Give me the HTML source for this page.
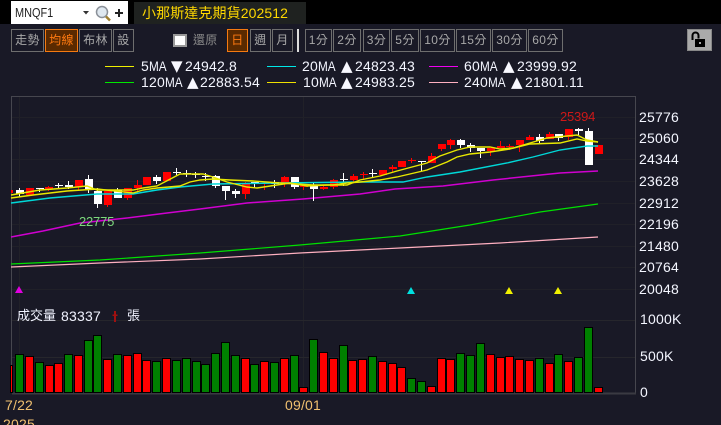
<!DOCTYPE html>
<html><head><meta charset="utf-8"><style>
html,body{margin:0;padding:0;background:#191926;overflow:hidden;width:721px;height:425px;}
#w{position:absolute;left:0;top:0;width:721px;height:425px;overflow:hidden;font-family:"Liberation Sans","WenQuanYi Zen Hei","Noto Sans CJK TC",sans-serif;}
div{position:absolute;box-sizing:border-box;white-space:nowrap;}
.b{top:29px;height:23px;border:1px solid #6e6e6e;color:#a8a8a8;font-size:12px;line-height:21px;text-align:center;letter-spacing:.4px;}
.a{border-color:#f57a10;background:#5a2a00;color:#ff7a10;}
.t{color:#f4f6ff;font-size:14px;line-height:16px;letter-spacing:.2px;}
.m{display:inline-block;transform:scaleX(.84);transform-origin:0 0;width:18px;letter-spacing:0;}
.g{color:#f8f8ff;font-family:"DejaVu Sans",sans-serif;font-size:15px;line-height:16px;}
.n{color:#f4f6ff;font-size:14px;line-height:16px;left:639px;letter-spacing:.2px;}
.l{height:1px;}
svg{position:absolute;left:0;top:0;}
</style></head><body><div id="w">
<div style="left:0;top:0;width:721px;height:24px;background:#000"></div>
<div style="left:11px;top:1px;width:117px;height:23px;background:#fff"></div>
<div style="left:15px;top:5px;color:#222;font-size:13px;line-height:16px;transform:scaleX(.84);transform-origin:0 0">MNQF1</div>
<div style="left:134px;top:2px;width:172px;height:22px;background:#1f2220;color:#ffd800;font-size:14px;line-height:23px;padding-left:8px;letter-spacing:.1px;">小那斯達克期貨202512</div>
<div class="b" style="left:11px;width:33px">走勢</div>
<div class="b a" style="left:45px;width:33px">均線</div>
<div class="b" style="left:79px;width:33px">布林</div>
<div class="b" style="left:113px;width:21px">設</div>
<div style="left:173px;top:34px;width:14px;height:13px;background:#fff;border:2px solid #999"></div>
<div style="left:193px;top:31px;color:#8a8a8a;font-size:12px;line-height:18px;letter-spacing:.2px">還原</div>
<div class="b a" style="left:227px;width:21px">日</div>
<div class="b" style="left:250px;width:21px">週</div>
<div class="b" style="left:272px;width:21px">月</div>
<div style="left:297px;top:29px;width:2px;height:23px;background:#ddd"></div>
<div class="b" style="left:305px;width:27px">1分</div>
<div class="b" style="left:333px;width:28px">2分</div>
<div class="b" style="left:363px;width:27px">3分</div>
<div class="b" style="left:391px;width:28px">5分</div>
<div class="b" style="left:420px;width:35px">10分</div>
<div class="b" style="left:456px;width:35px">15分</div>
<div class="b" style="left:492px;width:35px">30分</div>
<div class="b" style="left:528px;width:35px">60分</div>
<div style="left:687px;top:29px;width:25px;height:22px;background:#aaa;border:1px solid #888"></div>

<div class="l" style="left:105px;top:66px;width:29px;background:#f0f000"></div>
<div class="t" style="left:141px;top:58px">5<span class="m">MA</span></div>
<div class="g" style="left:171px;top:58px">▼</div>
<div class="t" style="left:185px;top:58px">24942.8</div>
<div class="l" style="left:267px;top:66px;width:29px;background:#00e8e8"></div>
<div class="t" style="left:302px;top:58px">20<span class="m">MA</span></div>
<div class="g" style="left:341px;top:58px">▲</div>
<div class="t" style="left:355px;top:58px">24823.43</div>
<div class="l" style="left:429px;top:66px;width:29px;background:#f000f0"></div>
<div class="t" style="left:464px;top:58px">60<span class="m">MA</span></div>
<div class="g" style="left:503px;top:58px">▲</div>
<div class="t" style="left:517px;top:58px">23999.92</div>
<div class="l" style="left:105px;top:82px;width:29px;background:#00e800"></div>
<div class="t" style="left:141px;top:74px">120<span class="m">MA</span></div>
<div class="g" style="left:187px;top:74px">▲</div>
<div class="t" style="left:200px;top:74px">22883.54</div>
<div class="l" style="left:267px;top:82px;width:29px;background:#f0e000"></div>
<div class="t" style="left:303px;top:74px">10<span class="m">MA</span></div>
<div class="g" style="left:341px;top:74px">▲</div>
<div class="t" style="left:355px;top:74px">24983.25</div>
<div class="l" style="left:429px;top:82px;width:29px;background:#ffb0c0"></div>
<div class="t" style="left:464px;top:74px">240<span class="m">MA</span></div>
<div class="g" style="left:511px;top:74px">▲</div>
<div class="t" style="left:525px;top:74px">21801.11</div>

<svg width="721" height="425" viewBox="0 0 721 425">
<!-- lock -->
<path d="M692.500 40v-4.500a3 3 0 0 1 6 0v3" fill="none" stroke="#000" stroke-width="2"/>
<path d="M695 39h10v8h-10z" fill="#000"/><path d="M699 42h2v2h-2z" fill="#aaa"/>
<!-- input icons -->
<path d="M83 11h6l-3 3.500z" fill="#333"/>
<circle cx="102" cy="12" r="5.500" fill="#dfe8f0" stroke="#8a9098" stroke-width="1.500"/>
<path d="M106 16.500l4 4" stroke="#a08030" stroke-width="2.500"/>
<path d="M115 13h8M119 9v8" stroke="#222" stroke-width="2"/>
<!-- frame -->
<path d="M11.500 96.500H635.500V393" fill="none" stroke="#46464e" stroke-width="1"/>
<path d="M11.500 96V393" stroke="#46464e"/>
<path d="M19.500 97V392M303.500 97V392" stroke="#212128"/>
<path d="M12 117.500H635M12 138.500H635M12 159.500H635M12 181.500H635M12 203.500H635M12 224.500H635M12 246.500H635M12 267.500H635M12 289.500H635" stroke="#202028"/>
<path d="M12 320.500H635M12 357.500H635" stroke="#26262c"/>
<path d="M12 393.500H636" stroke="#3a3a42" stroke-width="2"/>
<!-- MAs -->
<g fill="none" stroke-width="1.200">
<polyline stroke="#ffb0c0" points="11,267 100,263 200,259 300,253 400,248 500,243 598,237"/>
<polyline stroke="#00e000" points="11,264 100,260 200,253 300,245 400,236 470,225 540,212 598,204"/>
<polyline stroke="#d000d0" stroke-width="1.500" points="11,237 43,231 80,223 127,218 167,213 200,209 247,203 303,199 360,194 395,189 443,186 493,180 560,173 598,171"/>
</g>
<!-- candles -->
<path fill="#f00" d="M11 190h2v3h-2zM26 188h8v7h-8zM45 187h8v2h-8zM48 186h1v5h-1zM75 180h8v7h-8zM78 187h1v4h-1zM104 191h8v14h-8zM107 205h1v2h-1zM124 188h8v10h-8zM127 198h1v2h-1zM134 185h8v3h-8zM137 180h1v12h-1zM143 177h8v8h-8zM163 172h8v9h-8zM242 184h8v10h-8zM245 182h1v17h-1zM261 183h8v1h-8zM264 182h1v8h-1zM281 177h8v6h-8zM284 176h1v11h-1zM300 185h8v2h-8zM303 187h1v3h-1zM320 187h8v2h-8zM323 185h1v5h-1zM330 180h8v7h-8zM333 179h1v10h-1zM350 176h8v4h-8zM353 174h1v8h-1zM360 174h8v1h-8zM363 172h1v7h-1zM379 170h8v5h-8zM389 167h8v2h-8zM392 165h1v7h-1zM398 161h8v6h-8zM408 160h8v1h-8zM411 158h1v5h-1zM428 156h8v7h-8zM431 153h1v3h-1zM438 144h8v5h-8zM441 149h1v2h-1zM447 140h8v5h-8zM450 139h1v10h-1zM487 148h8v3h-8zM490 151h1v5h-1zM497 146h8v2h-8zM500 141h1v7h-1zM506 146h8v1h-8zM509 144h1v6h-1zM516 140h8v5h-8zM519 145h1v7h-1zM526 137h8v3h-8zM529 135h1v2h-1zM546 134h8v5h-8zM549 132h1v2h-1zM565 129h8v8h-8zM568 137h1v3h-1zM595 145h8v9h-8z"/>
<path fill="#fff" d="M16 190h8v4h-8zM19 188h1v9h-1zM36 188h8v1h-8zM39 188h1v4h-1zM55 185h8v1h-8zM58 183h1v5h-1zM65 185h8v2h-8zM68 181h1v8h-1zM85 179h8v11h-8zM88 175h1v18h-1zM94 191h8v13h-8zM97 188h1v20h-1zM114 190h8v8h-8zM117 188h1v2h-1zM153 177h8v4h-8zM156 175h1v9h-1zM173 172h8v1h-8zM176 168h1v7h-1zM183 173h8v1h-8zM186 170h1v7h-1zM192 174h8v1h-8zM195 172h1v6h-1zM202 176h8v1h-8zM205 173h1v8h-1zM212 176h8v10h-8zM215 175h1v13h-1zM222 186h8v5h-8zM225 191h1v9h-1zM232 191h8v3h-8zM235 189h1v9h-1zM251 182h8v2h-8zM254 184h1v4h-1zM271 182h8v2h-8zM274 180h1v8h-1zM291 177h8v10h-8zM294 187h1v2h-1zM310 186h8v3h-8zM313 183h1v18h-1zM340 179h8v1h-8zM343 173h1v13h-1zM369 173h8v1h-8zM372 169h1v8h-1zM418 161h8v1h-8zM421 161h1v10h-1zM457 140h8v5h-8zM460 139h1v9h-1zM467 145h8v3h-8zM470 143h1v9h-1zM477 148h8v3h-8zM480 151h1v7h-1zM536 137h8v4h-8zM539 134h1v9h-1zM555 134h8v4h-8zM558 138h1v3h-1zM575 129h8v2h-8zM578 128h1v7h-1zM585 131h8v34h-8zM588 128h1v3h-1z"/>
<g fill="none" stroke-width="1.400">
<polyline stroke="#00d8d8" points="11,203 50,198 97,194 133,194 157,190 180,187 213,184 280,183 360,182 403,182 427,177 460,172 507,163 533,157 560,150 587,146 598,146"/>
<polyline stroke="#e8e800" points="11,198 33,195 67,191 97,189 133,193 143,190 157,188 180,186 190,182 200,180 213,179 230,180 253,181 280,183 313,185 333,185 347,183 360,182 380,180 397,177 427,170 447,162 457,157 470,154 490,152 510,149 530,144 560,143 577,139 587,141 598,142"/>
<polyline stroke="#e8e800" points="11,195 40,190 67,188 87,186 97,190 133,190 143,188 157,186 180,174 203,174 213,177 227,182 247,187 257,188 277,185 290,183 307,186 327,185 347,185 360,180 380,176 397,171 427,163 440,156 457,150 470,147 490,147 500,149 513,148 530,143 547,138 577,135 587,140 598,142"/>
</g>
<!-- markers -->
<path d="M15 293l4-7 4 7z" fill="#e000e0"/>
<path d="M407 294l4-7 4 7z" fill="#00e0e0"/>
<path d="M505 294l4-7 4 7z" fill="#f0f000"/>
<path d="M554 294l4-7 4 7z" fill="#f0f000"/>
<!-- volume -->
<g stroke="#000" stroke-width="1">
<path fill="#f00" d="M10.500 365.500h2V392.500h-2zM25.500 356.500h8V392.500h-8zM45.500 365.500h8V392.500h-8zM54.500 363.500h8V392.500h-8zM74.500 355.500h8V392.500h-8zM103.500 359.500h8V392.500h-8zM123.500 355.500h8V392.500h-8zM133.500 353.500h8V392.500h-8zM142.500 360.500h8V392.500h-8zM162.500 358.500h8V392.500h-8zM241.500 358.500h8V392.500h-8zM260.500 361.500h8V392.500h-8zM280.500 358.500h8V392.500h-8zM299.500 387.500h8V392.500h-8zM319.500 352.500h8V392.500h-8zM329.500 358.500h8V392.500h-8zM348.500 360.500h8V392.500h-8zM358.500 359.500h8V392.500h-8zM378.500 361.500h8V392.500h-8zM388.500 363.500h8V392.500h-8zM397.500 367.500h8V392.500h-8zM427.500 386.500h8V392.500h-8zM437.500 358.500h8V392.500h-8zM446.500 359.500h8V392.500h-8zM486.500 354.500h8V392.500h-8zM496.500 357.500h8V392.500h-8zM505.500 356.500h8V392.500h-8zM515.500 359.500h8V392.500h-8zM525.500 360.500h8V392.500h-8zM545.500 363.500h8V392.500h-8zM564.500 361.500h8V392.500h-8zM594.500 387.500h8V392.500h-8z"/>
<path fill="#008000" d="M15.500 354.500h8V392.500h-8zM35.500 362.500h8V392.500h-8zM64.500 354.500h8V392.500h-8zM84.500 340.500h8V392.500h-8zM93.500 335.500h8V392.500h-8zM113.500 354.500h8V392.500h-8zM152.500 361.500h8V392.500h-8zM172.500 360.500h8V392.500h-8zM182.500 358.500h8V392.500h-8zM192.500 361.500h8V392.500h-8zM201.500 364.500h8V392.500h-8zM211.500 353.500h8V392.500h-8zM221.500 342.500h8V392.500h-8zM231.500 355.500h8V392.500h-8zM250.500 364.500h8V392.500h-8zM270.500 362.500h8V392.500h-8zM290.500 355.500h8V392.500h-8zM309.500 339.500h8V392.500h-8zM339.500 345.500h8V392.500h-8zM368.500 356.500h8V392.500h-8zM407.500 378.500h8V392.500h-8zM417.500 381.500h8V392.500h-8zM456.500 353.500h8V392.500h-8zM466.500 355.500h8V392.500h-8zM476.500 343.500h8V392.500h-8zM535.500 358.500h8V392.500h-8zM554.500 354.500h8V392.500h-8zM574.500 357.500h8V392.500h-8zM584.500 327.500h8V392.500h-8z"/>
</g>
<path d="M114 314h2v8h-2zM112.500 314.500h5v1.500h-5zM114 311h2v4h-2z" fill="#a01010"/>
</svg>

<div style="left:560px;top:109px;color:#cc1818;font-size:13px;line-height:16px;letter-spacing:-.2px">25394</div>
<div style="left:79px;top:214px;color:#7cd87c;font-size:13px;line-height:16px;letter-spacing:-.2px">22775</div>
<div class="n" style="top:109px">25776</div>
<div class="n" style="top:130px">25060</div>
<div class="n" style="top:151px">24344</div>
<div class="n" style="top:173px">23628</div>
<div class="n" style="top:195px">22912</div>
<div class="n" style="top:216px">22196</div>
<div class="n" style="top:238px">21480</div>
<div class="n" style="top:259px">20764</div>
<div class="n" style="top:281px">20048</div>
<div class="n" style="top:311px;left:640px">1000K</div>
<div class="n" style="top:348px;left:640px">500K</div>
<div class="n" style="top:384px;left:640px">0</div>
<div style="left:17px;top:308px;color:#f0f2ff;font-size:13px;line-height:16px">成交量</div>
<div class="t" style="left:61px;top:308px;color:#f0f2ff">83337</div>
<div style="left:127px;top:308px;color:#f0f2ff;font-size:13px;line-height:16px">張</div>
<div style="left:5px;top:397px;color:#f0c070;font-size:14px;line-height:16px;letter-spacing:.2px">7/22</div>
<div style="left:3px;top:416px;color:#f0c070;font-size:14px;line-height:16px;letter-spacing:.2px">2025</div>
<div style="left:285px;top:397px;color:#f0c070;font-size:14px;line-height:16px;letter-spacing:.2px">09/01</div>
</div></body></html>
